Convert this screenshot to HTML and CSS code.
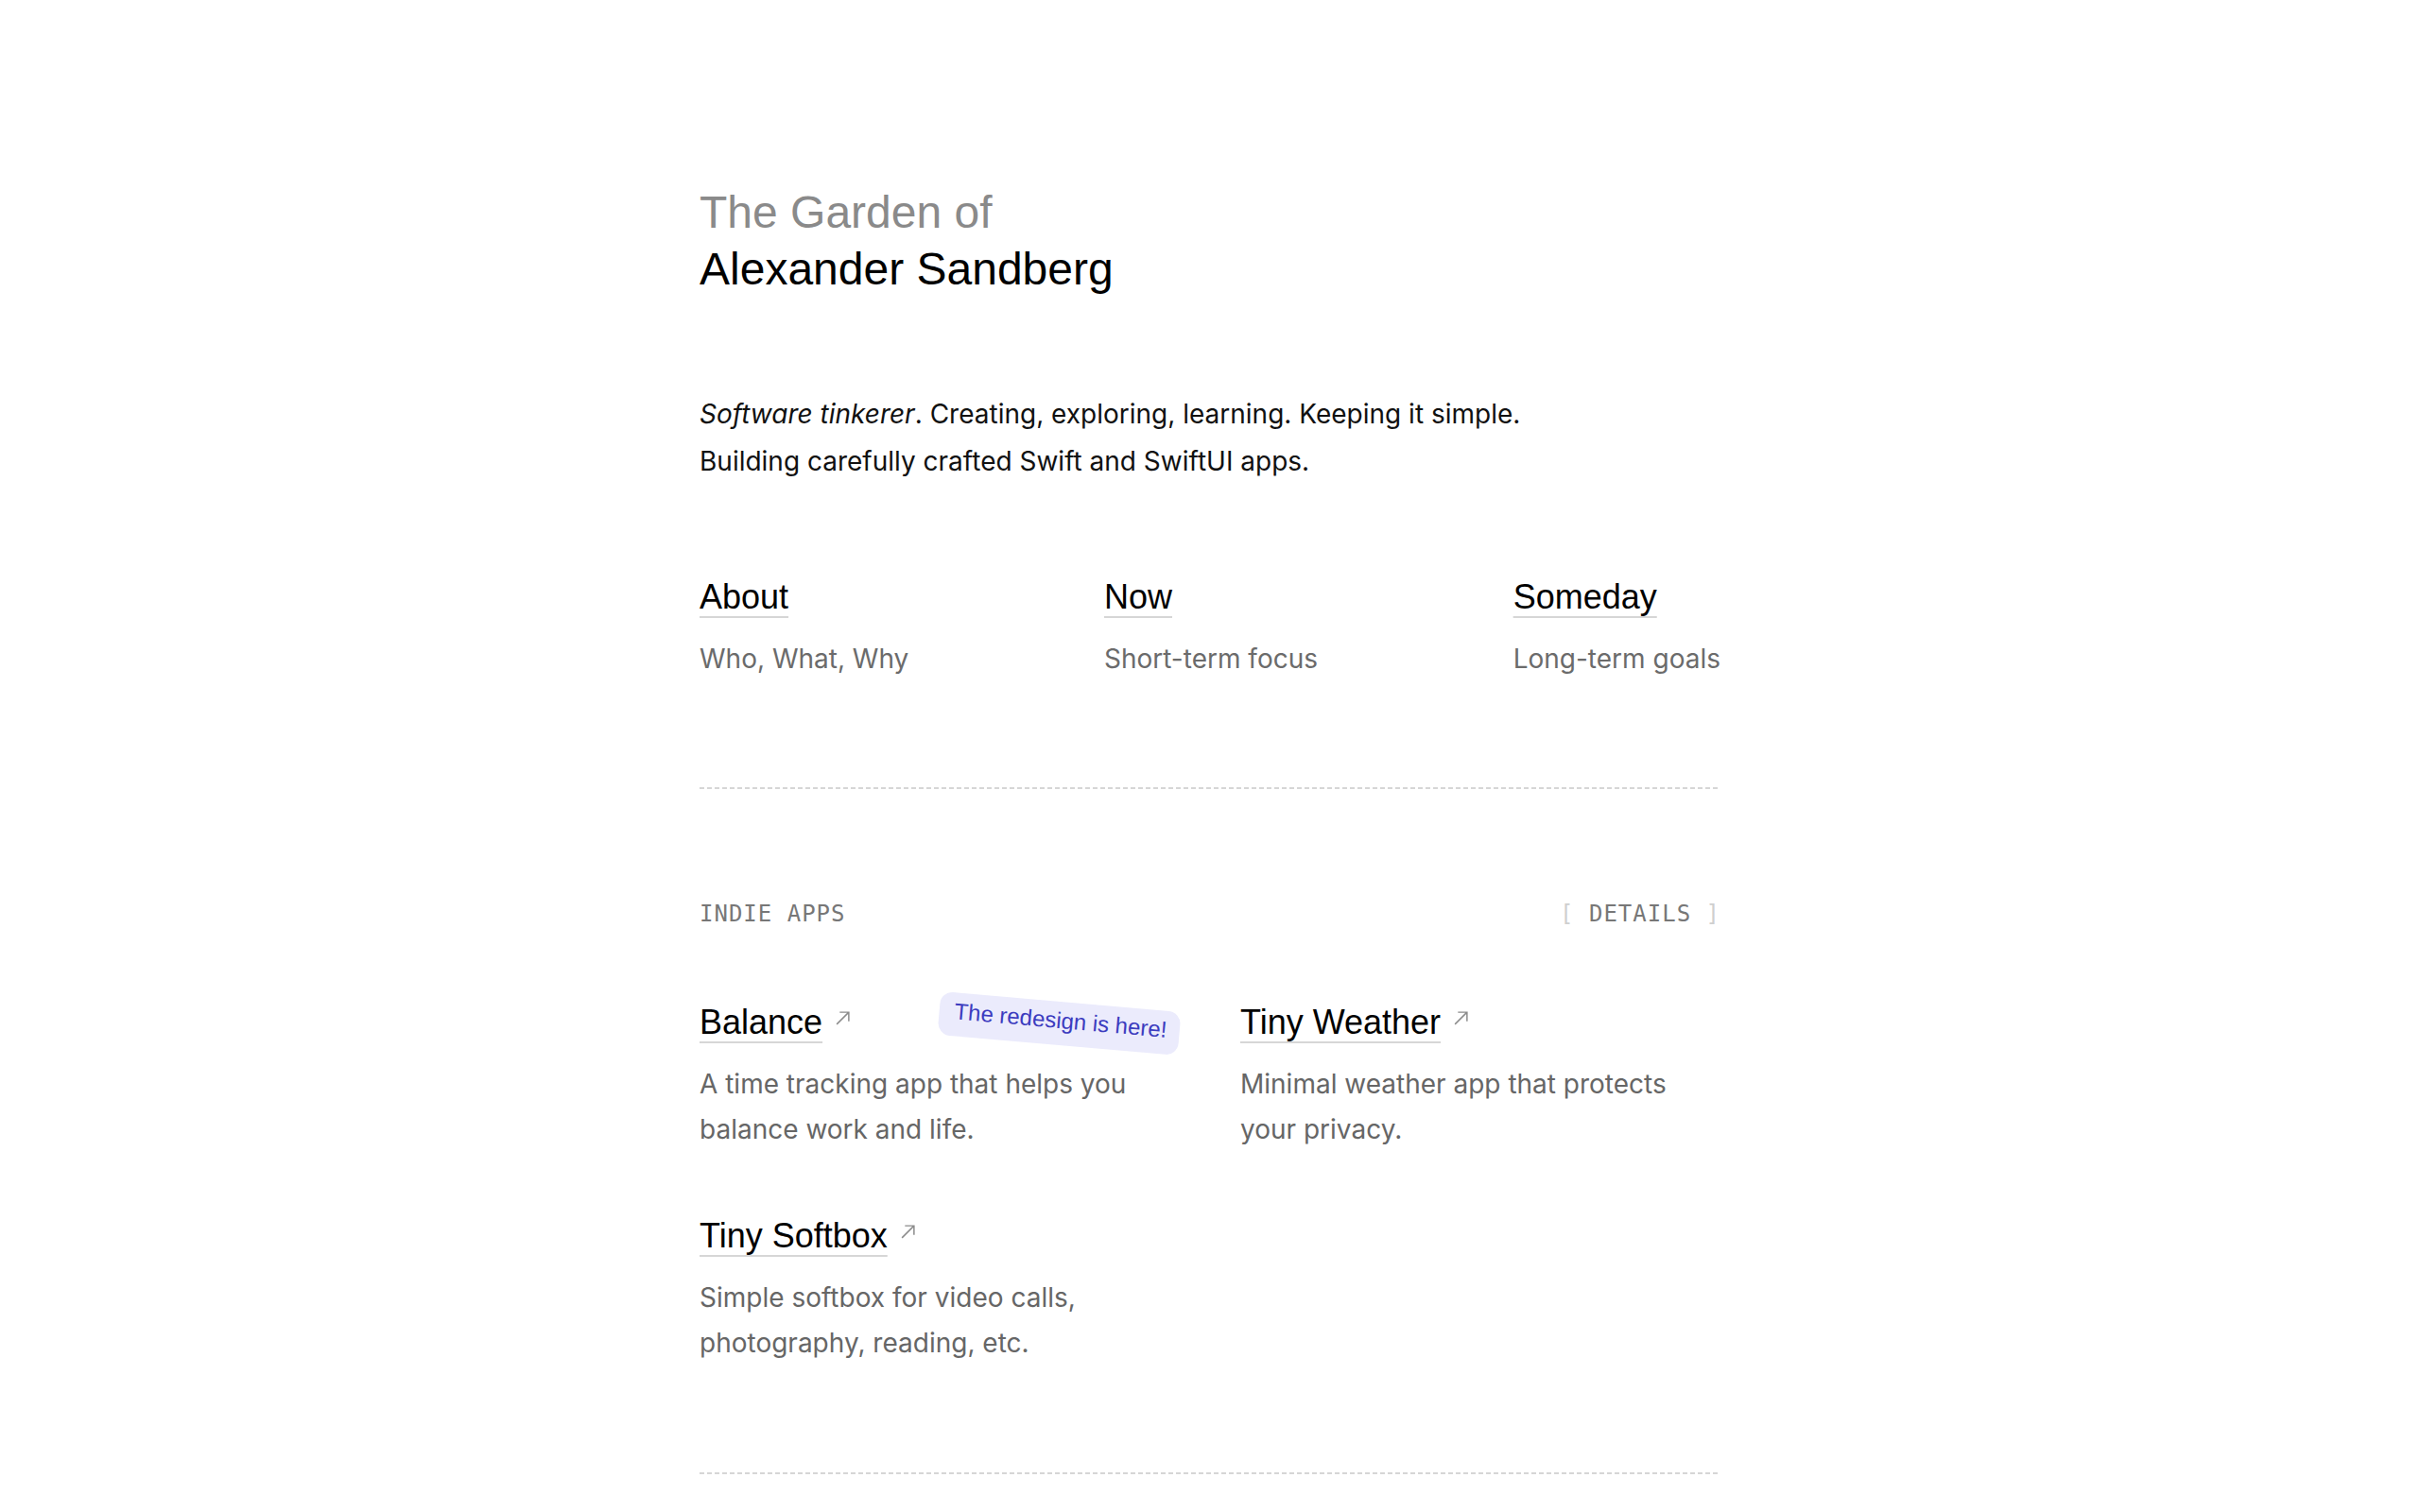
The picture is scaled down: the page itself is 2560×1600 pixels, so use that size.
FILE: index.html
```html
<!DOCTYPE html>
<html lang="en">
<head>
    <meta charset="UTF-8" />
    <meta name="viewport" content="width=device-width, initial-scale=1" />
    <title>The Garden of Alexander Sandberg</title>
    <link rel="stylesheet" href="styles.css">
</head>
<body>
    <main class="page">
        <!-- Intro -->
        <header class="intro">
            <h1 class="title">
                <span class="title-pre">The Garden of</span>
                <span class="title-name">Alexander Sandberg</span>
            </h1>
            <p class="tagline"><em>Software tinkerer</em>. Creating, exploring, learning. Keeping it simple.<br>Building carefully crafted Swift and SwiftUI apps.</p>
        </header>

        <!-- Pages -->
        <nav class="pages">
            <a class="page-link" href="#">
                <span class="link-title">About</span>
                <span class="page-sub">Who, What, Why</span>
            </a>
            <a class="page-link" href="#">
                <span class="link-title">Now</span>
                <span class="page-sub">Short-term focus</span>
            </a>
            <a class="page-link" href="#">
                <span class="link-title">Someday</span>
                <span class="page-sub">Long-term goals</span>
            </a>
        </nav>

        <hr class="divider">

        <!-- Indie apps -->
        <section class="apps">
            <div class="section-head">
                <h2 class="section-label">INDIE APPS</h2>
                <a class="details" href="#"><span class="bracket">[</span> DETAILS <span class="bracket">]</span></a>
            </div>

            <div class="app-grid">
                <article class="app">
                    <div class="app-head">
                        <a class="link-title" href="#">Balance</a>
                        <svg class="ext" viewBox="0 0 16 16" width="16" height="16"><path d="M2 14 L14 2 M5 2 H14 V11" /></svg>
                    </div>
                    <span class="badge">The redesign is here!</span>
                    <p class="app-desc">A time tracking app that helps you balance work and life.</p>
                </article>

                <article class="app">
                    <div class="app-head">
                        <a class="link-title" href="#">Tiny Weather</a>
                        <svg class="ext" viewBox="0 0 16 16" width="16" height="16"><path d="M2 14 L14 2 M5 2 H14 V11" /></svg>
                    </div>
                    <p class="app-desc">Minimal weather app that protects your privacy.</p>
                </article>

                <article class="app">
                    <div class="app-head">
                        <a class="link-title" href="#">Tiny Softbox</a>
                        <svg class="ext" viewBox="0 0 16 16" width="16" height="16"><path d="M2 14 L14 2 M5 2 H14 V11" /></svg>
                    </div>
                    <p class="app-desc">Simple softbox for video calls, photography, reading, etc.</p>
                </article>
            </div>
        </section>

        <hr class="divider divider-end">
    </main>
</body>
</html>
```

FILE: styles.css
```css
* {
    box-sizing: border-box;
    margin: 0;
    padding: 0;
}

html, body {
    background: #fff;
}

body {
    font-family: Inter, 'Noto Sans', sans-serif;
    color: #111;
}

.page {
    width: 1080px;
    margin: 0 auto;
    padding-top: 195px;
}

/* Intro */
.title {
    font-family: 'Liberation Sans', Arial, sans-serif;
    font-weight: 400;
    font-size: 48px;
    line-height: 60px;
}

.title span {
    display: block;
}

.title-pre {
    color: #8a8a8a;
}

.title-name {
    color: #000;
}

.tagline {
    margin-top: 98px;
    font-size: 28px;
    line-height: 50px;
    color: #111;
}

/* Shared link title with soft underline */
.link-title {
    font-family: 'Liberation Sans', Arial, sans-serif;
    font-size: 36px;
    line-height: 44px;
    color: #000;
    text-decoration: underline;
    text-decoration-color: #d6d6d6;
    text-decoration-thickness: 2px;
    text-underline-offset: 8px;
    text-decoration-skip-ink: auto;
}

/* Pages */
.pages {
    margin-top: 97px;
    display: flex;
    justify-content: space-between;
}

.page-link {
    display: flex;
    flex-direction: column;
    align-items: flex-start;
    text-decoration: none;
}

.page-sub {
    margin-top: 18px;
    font-size: 28px;
    line-height: 50px;
    color: #6b6b6b;
}

.divider {
    border: none;
    height: 2px;
    margin-top: 111px;
    background: repeating-linear-gradient(to right, #d6d6d6 0 5px, transparent 5px 8px);
}

.divider-end {
    margin-top: 113px;
}

/* Apps */
.apps {
    padding-top: 116px;
}

.section-head {
    display: flex;
    justify-content: space-between;
    align-items: center;
}

.section-label,
.details {
    font-family: 'DejaVu Sans Mono', 'Liberation Mono', monospace;
    font-weight: 400;
    font-size: 24px;
    line-height: 32px;
    letter-spacing: 1px;
    color: #777;
    text-decoration: none;
}

.details .bracket {
    color: #cfcfcf;
}

.app-grid {
    margin-top: 77px;
    display: grid;
    grid-template-columns: 1fr 1fr;
    column-gap: 64px;
    row-gap: 67px;
}

.app {
    position: relative;
}

.app-head {
    display: flex;
    align-items: flex-start;
    gap: 13px;
}

.ext {
    margin-top: 9px;
    width: 17px;
    height: 17px;
    fill: none;
    stroke: #8c8c8c;
    stroke-width: 1.4;
}

.app-desc {
    margin-top: 19px;
    font-size: 28px;
    line-height: 48px;
    color: #666;
}

/* Badge over the Balance card */
.badge {
    position: absolute;
    top: 0;
    right: 0;
    padding: 6px 14px 12px 16px;
    border-radius: 13px;
    background: #ebebfc;
    color: #3c3cbf;
    font-family: 'Liberation Sans', Arial, sans-serif;
    font-size: 24px;
    line-height: 28px;
    transform: rotate(5deg);
    white-space: nowrap;
}
```
